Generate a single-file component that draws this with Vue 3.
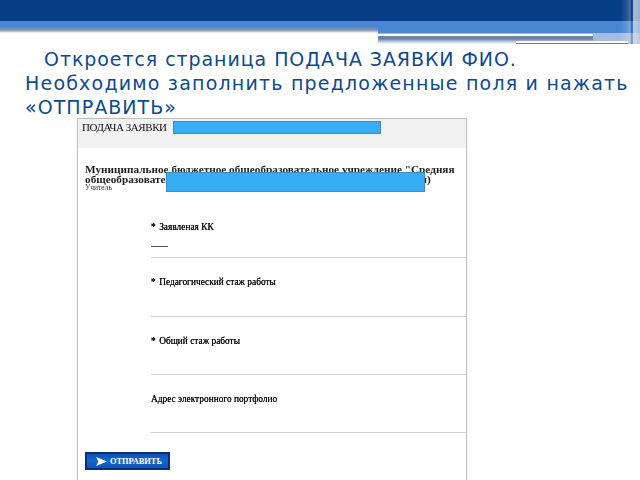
<script setup>
const fields = [
  { label: 'Заявленая КК', req: true, value: true },
  { label: 'Педагогический стаж работы', req: true },
  { label: 'Общий стаж работы', req: true },
  { label: 'Адрес электронного портфолио', req: false },
]
</script>

<template>
  <div class="slide">
    <header class="banner">
      <div class="dark"></div>
      <div class="light">
        <div class="shade"></div>
      </div>
      <div class="under">
        <div class="under-gap"></div>
        <div class="under-deco">
          <div class="bar-a"></div>
          <div class="bar-b"></div>
        </div>
      </div>
      <div class="edge"></div>
    </header>

    <p class="intro">
      <span class="first">Откроется страница ПОДАЧА ЗАЯВКИ ФИО.</span><br />
      <span class="second">Необходимо заполнить предложенные поля и нажать</span><br />
      «ОТПРАВИТЬ»
    </p>

    <section class="form">
      <div class="form-head">
        <span class="form-title">ПОДАЧА ЗАЯВКИ</span>
        <span class="mask-name"></span>
      </div>
      <div class="org">
        <div class="org-name">Муниципальное бюджетное общеобразовательное учреждение "Средняя</div>
        <div class="org-name">общеобразовательная школа &#8470; 1 города Энска Энской области р-н)</div>
        <div class="org-role">Учитель</div>
        <span class="mask-org"></span>
      </div>
      <div class="fields">
        <div v-for="f in fields" :key="f.label" class="field" :class="{ 'has-value': f.value }">
          <div class="label"><span v-if="f.req" class="star">*</span>{{ f.label }}</div>
          <div v-if="f.value" class="value"></div>
        </div>
      </div>
      <div class="submit">
        <svg class="arrow" viewBox="0 0 11 9" width="11" height="9">
          <path d="M0 0 L11 4.5 L0 9 L2.5 4.5 Z" fill="#fff" />
        </svg>
        <span>ОТПРАВИТЬ</span>
      </div>
    </section>
  </div>
</template>

<style scoped>
.slide {
  position: relative;
  width: 640px;
  height: 480px;
  overflow: hidden;
  background: #fff;
}
.banner {
  position: relative;
  height: 47px;
}
.dark {
  height: 21px;
  background: #073e88;
}
.light {
  position: relative;
  height: 12px;
  background: #4a86d4;
}
.shade {
  position: absolute;
  left: 0;
  top: 6px;
  width: 378px;
  height: 6px;
  background: linear-gradient(180deg, #5f86bd 0, #7f93b0 45%, #b9c2cf 75%, #fff 100%);
}
.under {
  display: flex;
  height: 12px;
}
.under-gap {
  width: 378px;
}
.under-deco {
  position: relative;
  flex: 1;
  height: 11px;
  background: linear-gradient(90deg, #8aa6d6, #aabfe0);
}
.bar-a {
  width: 215px;
  height: 11px;
  box-sizing: border-box;
  border-top: 1px solid #a8bbdc;
  background: linear-gradient(180deg, #fff 0, #fff 2px, #6e84a5 2px, #6e84a5 5px, #a9b9d3 7px, #fff 10px);
}
.bar-b {
  position: absolute;
  left: 138px;
  right: 12px;
  top: 8px;
  height: 2px;
  background: #fff;
  box-shadow: 0 1px 0 #777;
}
.edge {
  position: absolute;
  right: 0;
  top: 0;
  width: 20px;
  height: 44px;
  background: linear-gradient(90deg, rgba(255,255,255,0) 0, rgba(255,255,255,.15) 40%, rgba(255,255,255,.3) 50%, rgba(40,70,130,.3) 56%, rgba(40,70,130,.3) 62%, rgba(222,228,238,.75) 68%, rgba(190,202,220,.8) 100%);
}
.intro {
  margin: 0 0 0 25px;
  font-family: "DejaVu Sans", sans-serif;
  font-size: 19px;
  line-height: 24px;
  letter-spacing: 1.05px;
  color: #0c4a8e;
  white-space: nowrap;
}
.first {
  margin-left: 19px;
  letter-spacing: .93px;
}
.second {
  letter-spacing: 1.2px;
}
.form {
  position: absolute;
  left: 77px;
  top: 118px;
  width: 388px;
  height: 362px;
  border: 1px solid #bdbdbd;
  border-bottom: 0;
  background: #fff;
  font-family: "Liberation Serif", serif;
  color: #111;
}
.form-head {
  display: flex;
  align-items: flex-start;
  height: 27px;
  padding: 2px 0 0 4px;
  gap: 3px;
  background: #f1f1f1;
}
.form-title {
  width: 88px;
  font-size: 11px;
  line-height: 13px;
  letter-spacing: -0.45px;
  white-space: nowrap;
  filter: blur(.35px);
}
.mask-name {
  width: 206px;
  height: 11px;
  background: #35aef5;
  border: 1px solid #3d8dbf;
}
.org {
  position: relative;
  padding: 16px 0 0 7px;
  height: 36px;
}
.org-name {
  font-size: 11.25px;
  line-height: 10px;
  font-weight: bold;
  white-space: nowrap;
  color: #1c1c1c;
  filter: blur(.35px);
}
.org-role {
  font-size: 7.5px;
  line-height: 8px;
  color: #333;
  filter: blur(.3px);
}
.mask-org {
  position: absolute;
  left: 88px;
  top: 24px;
  width: 257px;
  height: 18px;
  background: #35aef5;
  border: 1px solid #3d8dbf;
}
.fields {
  margin-left: 73px;
}
.field {
  height: 58.3px;
  box-sizing: border-box;
  border-bottom: 1px solid #cfcfcf;
  padding-top: 18px;
  font-size: 9.35px;
  line-height: 12px;
  white-space: nowrap;
}
.has-value {
  padding-top: 21px;
}
.label {
  filter: blur(.3px);
  text-shadow: 0 0 .4px #000;
}
.star {
  font-weight: bold;
  margin-right: 3.5px;
}
.value {
  width: 17px;
  height: 1px;
  margin-top: 13px;
  background: #555;
}
.submit {
  display: flex;
  align-items: center;
  gap: 3px;
  width: 85px;
  height: 18px;
  margin: 19px 0 0 7px;
  box-sizing: border-box;
  padding-left: 9px;
  background: linear-gradient(180deg, #0f50b4, #1468d2 50%, #0f50b4);
  border: 2px solid #06307c;
  color: #fff;
  font-size: 8.4px;
  font-weight: bold;
  white-space: nowrap;
}
</style>
